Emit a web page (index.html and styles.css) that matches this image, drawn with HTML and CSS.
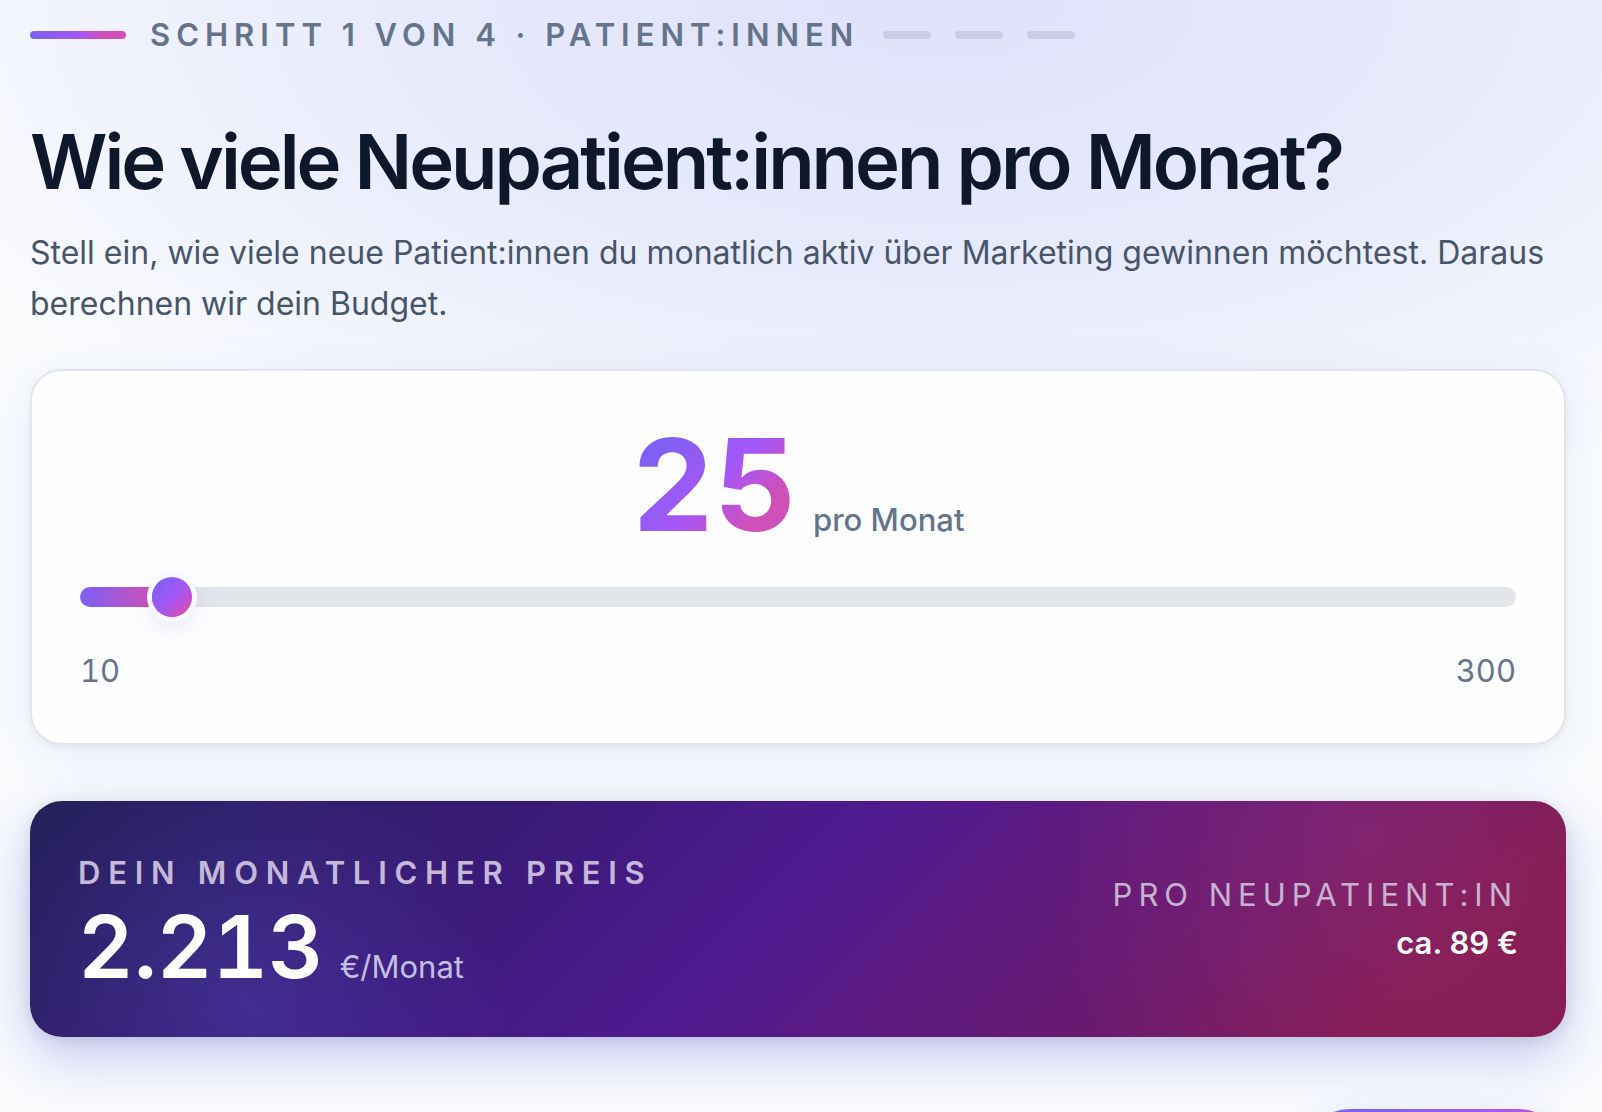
FILE: index.html
```html
<!DOCTYPE html>
<html lang="de">
<head>
  <meta charset="UTF-8">
  <meta name="viewport" content="width=device-width, initial-scale=1.0">
  <title>Budget-Rechner</title>
  <link rel="stylesheet" href="styles.css">
</head>
<body>
  <main class="wizard">
    <div class="progress">
      <span class="progress-bar active"></span>
      <span class="progress-label">Schritt 1 von 4 · Patient:innen</span>
      <span class="progress-bar"></span>
      <span class="progress-bar"></span>
      <span class="progress-bar"></span>
    </div>

    <h1><label for="patients">Wie viele Neupatient:innen pro Monat?</label></h1>
    <p class="intro">Stell ein, wie viele neue Patient:innen du monatlich aktiv über Marketing gewinnen möchtest. Daraus berechnen wir dein Budget.</p>

    <section class="slider-card">
      <div class="slider-value">
        <output id="patients-value" class="big-number" for="patients">25</output>
        <span class="unit">pro Monat</span>
      </div>
      <input type="range" id="patients" class="slider" min="10" max="300" value="25">
      <div class="slider-limits">
        <span>10</span>
        <span>300</span>
      </div>
    </section>

    <section class="price-card">
      <div class="price">
        <h2 class="price-label">Dein monatlicher Preis</h2>
        <p class="price-value">
          <span class="price-number">2.213</span>
          <span class="price-unit">€/Monat</span>
        </p>
      </div>
      <div class="per-patient">
        <p class="per-patient-label">Pro Neupatient:in</p>
        <p class="per-patient-value">ca. 89 €</p>
      </div>
    </section>

    <div class="actions">
      <button type="button" class="next-button"></button>
    </div>
  </main>

  <script>
    const slider = document.getElementById("patients");
    const value = document.getElementById("patients-value");

    // Fill the track up to the current value
    function updateSlider() {
      const percent = (slider.value - slider.min) / (slider.max - slider.min) * 100;
      slider.style.setProperty("--fill", percent + "%");
      value.textContent = slider.value;
    }

    slider.addEventListener("input", updateSlider);
    updateSlider();
  </script>
</body>
</html>
```
FILE: styles.css
```css
:root {
  --accent-start: #7c60f3;
  --accent-mid: #a457f9;
  --accent-end: #d04fb8;
  --text: #0f172a;
  --muted: #64748b;
}

* {
  box-sizing: border-box;
}

body {
  margin: 0;
  height: 100vh;
  overflow: hidden;
  font-family: Inter, "Liberation Sans", sans-serif;
  font-size: 31px;
  line-height: 48px;
  color: var(--text);
  background:
    radial-gradient(ellipse 1120px 560px at 59% 0, rgba(95, 100, 235, 0.17), rgba(95, 105, 235, 0.11) 50%, rgba(95, 120, 220, 0)),
    #f9fbfd;
}

h1, h2, p {
  margin: 0;
}

.wizard {
  padding: 11px 36px 0 30px;
}

.progress {
  display: flex;
  align-items: center;
  gap: 24px;
  margin-bottom: 56px;
}

.progress-bar {
  width: 48px;
  height: 8px;
  border-radius: 4px;
  background: #cbcde8;
}

.progress-bar.active {
  width: 96px;
  background: linear-gradient(90deg, var(--accent-start), var(--accent-mid) 50%, var(--accent-end) 75%);
}

.progress-label {
  font-weight: 600;
  letter-spacing: 6px;
  text-transform: uppercase;
  color: var(--muted);
}

h1 {
  margin-bottom: 20px;
  font-size: 76px;
  font-weight: 600;
  line-height: 92px;
  letter-spacing: -0.04em;
}

.intro {
  margin-bottom: 40px;
  font-size: 32px;
  line-height: 51px;
  color: #475569;
}

.slider-card {
  padding: 48px;
  border: 2px solid #e2e5ec;
  border-radius: 32px;
  background: #fefefe;
  box-shadow: 0 2px 6px rgba(15, 23, 42, 0.05), 0 12px 48px rgba(90, 120, 190, 0.1);
}

.slider-value {
  display: flex;
  justify-content: center;
  align-items: baseline;
  gap: 16px;
  margin-bottom: 36px;
}

.big-number {
  font-size: 128px;
  font-weight: 700;
  line-height: 132px;
  font-variant-numeric: tabular-nums;
  color: transparent;
  background: linear-gradient(135deg, var(--accent-start) 15%, var(--accent-mid) 50%, var(--accent-end) 75%);
  background-clip: text;
  -webkit-background-clip: text;
}

.unit {
  font-weight: 500;
  color: var(--muted);
}

.slider {
  display: block;
  width: 100%;
  height: 20px;
  margin: 0 0 40px;
  border-radius: 10px;
  background:
    linear-gradient(90deg, var(--accent-start), var(--accent-end)) 0 0 / var(--fill) 100% no-repeat,
    #e2e5ea;
  -webkit-appearance: none;
  appearance: none;
  cursor: pointer;
}

.slider::-webkit-slider-thumb {
  -webkit-appearance: none;
  width: 40px;
  height: 40px;
  border-radius: 50%;
  background: linear-gradient(135deg, var(--accent-start) 15%, var(--accent-mid) 50%, var(--accent-end) 85%);
  box-shadow: 0 0 0 5px #f8f9fd, 0 8px 24px rgba(99, 102, 241, 0.2);
}

.slider-limits {
  display: flex;
  justify-content: space-between;
  font-variant-numeric: tabular-nums;
  color: var(--muted);
}

.price-card {
  display: flex;
  justify-content: space-between;
  align-items: center;
  margin-top: 56px;
  padding: 48px;
  border-radius: 32px;
  color: #ffffff;
  background:
    radial-gradient(circle 260px at 14% 85%, rgba(99, 102, 241, 0.24), rgba(99, 102, 241, 0)),
    radial-gradient(circle 340px at 87% 15%, rgba(170, 55, 130, 0.3), rgba(170, 55, 130, 0)),
    linear-gradient(135deg, #24205a, #3b1a78 30%, #4f1a90 48%, #681a70 72%, #831b50 90%);
  box-shadow: 0 4px 16px rgba(15, 23, 42, 0.1), 0 20px 56px rgba(70, 75, 215, 0.28);
}

.price-label {
  margin-bottom: 8px;
  font-size: 31px;
  font-weight: 600;
  letter-spacing: 0.25em;
  text-transform: uppercase;
  color: #c5b8d8;
}

.price-value {
  display: flex;
  align-items: baseline;
  gap: 16px;
}

.price-number {
  font-size: 86px;
  font-weight: 600;
  line-height: 84px;
  font-variant-numeric: tabular-nums;
}

.price-unit {
  line-height: 40px;
  color: #c3bfe2;
}

.per-patient {
  text-align: right;
}

.per-patient-label {
  letter-spacing: 6px;
  text-transform: uppercase;
  color: #c7b3d0;
}

.per-patient-value {
  font-weight: 600;
}

.actions {
  display: flex;
  justify-content: flex-end;
  margin-top: 72px;
}

.next-button {
  width: 264px;
  height: 96px;
  border: none;
  border-radius: 48px;
  background: linear-gradient(135deg, var(--accent-start) 20%, var(--accent-mid) 50%, var(--accent-end) 80%);
  box-shadow: 0 8px 32px rgba(99, 102, 241, 0.2);
  cursor: pointer;
}
```
